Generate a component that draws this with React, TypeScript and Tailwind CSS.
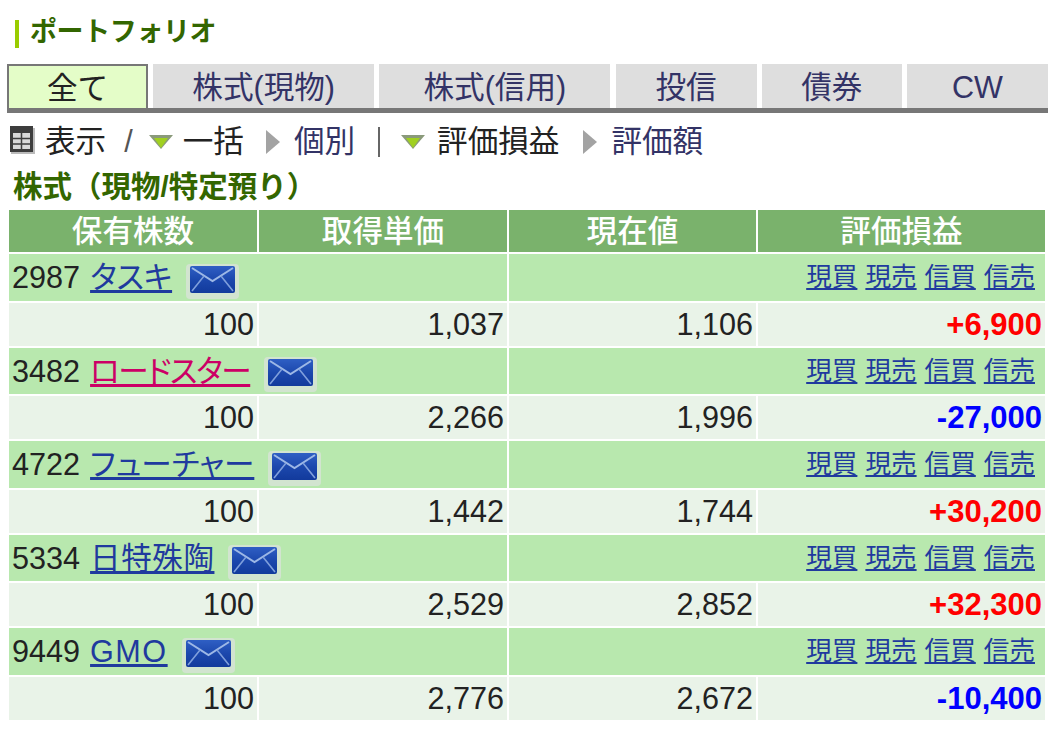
const FONT = "font-['Liberation_Sans','Noto_Sans_CJK_JP',sans-serif]";

const tabs = [
  { label: '全て', width: 'w-[141px]', active: true },
  { label: '株式(現物)', width: 'w-[221px]' },
  { label: '株式(信用)', width: 'w-[231px]' },
  { label: '投信', width: 'w-[141px]' },
  { label: '債券', width: 'w-[140px]' },
  { label: 'CW', width: 'w-[141px]' },
];

const stocks = [
  { code: '2987', name: 'タスキ', track: 'tracking-[-0.3px]', qty: '100', cost: '1,037', price: '1,106', pl: '+6,900', up: true },
  { code: '3482', name: 'ロードスター', track: 'tracking-[-1.4px]', qty: '100', cost: '2,266', price: '1,996', pl: '-27,000', up: false, visited: true },
  { code: '4722', name: 'フューチャー', track: 'tracking-normal', qty: '100', cost: '1,442', price: '1,744', pl: '+30,200', up: true },
  { code: '5334', name: '日特殊陶', track: 'tracking-[0.5px]', qty: '100', cost: '2,529', price: '2,852', pl: '+32,300', up: true },
  { code: '9449', name: 'GMO', track: 'tracking-[1.5px]', qty: '100', cost: '2,776', price: '2,672', pl: '-10,400', up: false },
];

function MailIcon({ className }: { className?: string }) {
  return (
    <svg className={className} width="55" height="35" viewBox="0 0 55 35">
      <defs>
        <linearGradient id="mailBlue" x1="0" y1="0" x2="0" y2="1">
          <stop offset="0" stopColor="#2f5fc4" />
          <stop offset="0.5" stopColor="#1c48ad" />
          <stop offset="1" stopColor="#123a9c" />
        </linearGradient>
      </defs>
      <rect x="1" y="0" width="53" height="35" rx="4" fill="#d2e4d0" />
      <rect x="5" y="2" width="45" height="27" rx="2" fill="url(#mailBlue)" />
      <path d="M7 4 L27.5 17 L48 4" fill="none" stroke="#9db8e6" strokeWidth="2" />
      <path d="M7 27 L19 12 M48 27 L36 12" fill="none" stroke="#7f9fdc" strokeWidth="1.6" />
    </svg>
  );
}

function TableIcon() {
  return (
    <svg width="25" height="28" viewBox="0 0 25 28" className="shrink-0 mb-[3px]">
      <rect x="1" y="2" width="24" height="26" fill="#bbbbbb" />
      <rect x="0" y="0" width="23" height="26" fill="#3d3d3d" />
      <rect x="3" y="7" width="17" height="16" fill="#d9d9d9" />
      <path d="M3 12.5 H20 M3 18 H20 M11.5 7 V23" stroke="#3d3d3d" strokeWidth="1.5" />
    </svg>
  );
}

function DownArrow() {
  return (
    <svg width="24" height="14" viewBox="0 0 24 14" className="block">
      <path d="M0 0 H24 L12 14 Z" fill="#8a9a7a" />
      <path d="M5 3 H19 L12 13 Z" fill="#a0d020" />
    </svg>
  );
}

function RightArrow() {
  return (
    <svg width="14" height="24" viewBox="0 0 14 24" className="block">
      <path d="M0 0 L14 12 L0 24 Z" fill="#a3a3a3" />
    </svg>
  );
}

function TradeLinks() {
  return (
    <div className="flex justify-end gap-[8px] pr-[10px] text-[25.6px] leading-[47px] text-[#1f3a9e] underline">
      <span>現買</span>
      <span>現売</span>
      <span>信買</span>
      <span>信売</span>
    </div>
  );
}

export default function App() {
  return (
    <div className={`${FONT} w-[1056px] h-[744px] overflow-hidden bg-white text-[#222222]`}>
      {/* Title */}
      <div className="flex items-center h-[64px] pl-[15px]">
        <div className="w-[4px] h-[28px] mt-[4px] bg-[#99cc00]" />
        <h1 className="ml-[11px] text-[27px] font-bold leading-none tracking-[-0.4px] text-[#336600]">ポートフォリオ</h1>
      </div>

      {/* Tabs */}
      <div className="ml-[7px] w-[1041px] border-b-[5px] border-[#777777] flex justify-between">
        {tabs.map((tab) => (
          <div
            key={tab.label}
            className={`${tab.width} h-[44px] pt-[3px] flex items-center justify-center text-[30.6px] ${
              tab.active
                ? 'bg-[#e4fdc8] border-2 border-b-0 border-[#777777] text-[#222222]'
                : 'bg-[#dedede] text-[#333366]'
            }`}
          >
            {tab.label}
          </div>
        ))}
      </div>

      {/* Display options */}
      <div className="flex items-center h-[54px] pl-[10px] pt-[3px] text-[30.6px] leading-none">
        <TableIcon />
        <span className="ml-[10px]">表示</span>
        <span className="ml-[18px] text-[#555555]">/</span>
        <span className="ml-[16px]"><DownArrow /></span>
        <span className="ml-[10px]">一括</span>
        <span className="ml-[22px]"><RightArrow /></span>
        <span className="ml-[14px] text-[#333366]">個別</span>
        <span className="ml-[23px] w-[2px] h-[30px] bg-[#666666]" />
        <span className="ml-[21px]"><DownArrow /></span>
        <span className="ml-[12px]">評価損益</span>
        <span className="ml-[24px]"><RightArrow /></span>
        <span className="ml-[14px] text-[#333366]">評価額</span>
      </div>

      {/* Section heading */}
      <h2 className="h-[43px] pl-[13px] pt-[2px] text-[29.5px] font-bold leading-[36px] text-[#336600]">株式（現物/特定預り）</h2>

      {/* Table */}
      <div className="ml-[9px] w-[1036px] grid grid-cols-[248px_248px_247px_287px] gap-[2px]">
        {['保有株数', '取得単価', '現在値', '評価損益'].map((head) => (
          <div key={head} className="h-[42px] bg-[#7ab26c] text-white text-[30.6px] font-medium leading-[42px] text-center">
            {head}
          </div>
        ))}
        {stocks.map((s) => (
          <div key={s.code} className="contents">
            <div className="col-span-2 h-[46.6px] bg-[#b8e8ae] pl-[3px] flex items-center text-[30.6px] leading-none">
              <span>{s.code}</span>
              <span className={`ml-[10px] underline [font-feature-settings:'palt'] ${s.track} ${s.visited ? 'text-[#cc0066]' : 'text-[#1f3a9e]'}`}>{s.name}</span>
              <MailIcon className="ml-[13px] mt-[8px] shrink-0 blur-[0.6px]" />
            </div>
            <div className="col-span-2 h-[46.6px] bg-[#b8e8ae]">
              <TradeLinks />
            </div>
            <div className="h-[43px] bg-[#e9f3e8] pr-[3px] text-right text-[30.6px] leading-[43px]">{s.qty}</div>
            <div className="h-[43px] bg-[#e9f3e8] pr-[3px] text-right text-[30.6px] leading-[43px]">{s.cost}</div>
            <div className="h-[43px] bg-[#e9f3e8] pr-[3px] text-right text-[30.6px] leading-[43px]">{s.price}</div>
            <div className={`h-[43px] bg-[#e9f3e8] pr-[3px] text-right text-[31px] font-bold leading-[43px] ${s.up ? 'text-[#ff0000]' : 'text-[#0000ff]'}`}>{s.pl}</div>
          </div>
        ))}
      </div>
    </div>
  );
}
